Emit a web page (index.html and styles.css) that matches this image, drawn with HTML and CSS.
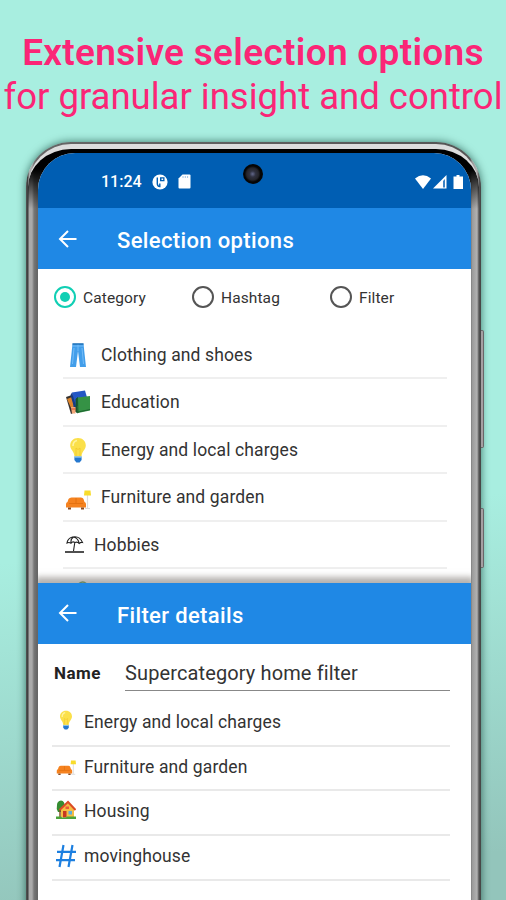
FILE: index.html
```html
<!DOCTYPE html>
<html lang="en">

<head>
    <meta charset="UTF-8" />
    <meta name="viewport" content="width=device-width, initial-scale=1.0" />
    <title>Selection options</title>
    <link rel="stylesheet" href="styles.css">
</head>

<body>
    <svg class="defs" width="0" height="0">
        <symbol id="back" viewBox="0 0 20 20">
            <path d="M18.5 10H2.5M10 2L2 10l8 8" fill="none" stroke="#fff" stroke-width="2" />
        </symbol>
        <symbol id="bulb" viewBox="0 0 26 26">
            <path d="M13 1c-4.800 0-7.800 3.300-7.800 7.600 0 4.200 4 5.700 4.200 10.900h7.200c.2-5.200 4.200-6.700 4.200-10.900 0-4.300-3-7.600-7.800-7.600z" fill="#fbe04a" />
            <path d="M8 9c0-3 1.500-5 4-5.500" fill="none" stroke="#fff3a0" stroke-width="1.600" />
            <path d="M11 19v-8l2 1.500 2-1.500v8" fill="none" stroke="#f3c92c" stroke-width=".8" />
            <path d="M9.400 19.500h7.200v3.500l-2 2.500h-3.200l-2-2.500z" fill="#2578cf" />
            <path d="M9.400 20h7.200" stroke="#9dd0f2" stroke-width="1.200" />
        </symbol>
        <symbol id="couch" viewBox="0 0 26 26">
            <path d="M22.500 9v13M20 22.500h5" stroke="#dcdcdc" stroke-width="1.200" />
            <path d="M19.500 4.500h6l.5 5h-7z" fill="#f8dc2b" />
            <path d="M3.500 13q1-1.500 3-1.500h9.500q2 0 2.500 1.500l1 3q1.500.5 1.500 2v3.500H1V18q0-1.500 1.500-2z" fill="#f5821f" />
            <path d="M11 12v5M4 17.500h14" stroke="#df6d0d" stroke-width=".8" />
            <path d="M3 21.500h3v2H3zM16 21.500h3v2h-3z" fill="#8a4a20" />
        </symbol>
    </svg>

    <div class="headline">
        <h1>Extensive selection options</h1>
        <p>for granular insight and control</p>
    </div>

    <div class="phone">
        <div class="side-button volume"></div>
        <div class="side-button power"></div>
        <div class="bezel">
            <div class="screen">
                <div class="status-bar">
                    <span class="clock">11:24</span>
                    <svg class="status-app" width="16" height="16" viewBox="0 0 16 16">
                        <circle cx="8" cy="8" r="7.600" fill="#fff" />
                        <path d="M5.300 3.500v6q0 3 2.500 3V9.500" fill="none" stroke="#005eb3" stroke-width="1.400" />
                        <path d="M8 3.300h4.500v4H8z" fill="#005eb3" />
                        <path d="M9.500 4.500h1.700v1.500H9.500z" fill="#fff" />
                    </svg>
                    <svg class="status-card" width="13" height="15" viewBox="0 0 13 15">
                        <path d="M4.500.5h7q1 0 1 1v12q0 1-1 1h-10q-1 0-1-1V4.500z" fill="#fff" />
                        <path d="M5 2v2M7.300 2v2M9.600 2v2" stroke="#9fc4e4" stroke-width="1" />
                    </svg>
                    <svg class="status-right" width="50" height="16" viewBox="0 0 50 16">
                        <path d="M0 4.500Q8-2 16 4.500L8 15z" fill="#fff" />
                        <path d="M18 14.500L31.500 1v13.500z" fill="#fff" />
                        <path d="M28 7l2-2v8.500h-2z" fill="#3e83c4" />
                        <path d="M41.500 1h3v1.500H48V15h-9.500V2.500h3z" fill="#fff" />
                    </svg>
                    <div class="camera"></div>
                </div>

                <div class="panel">
                    <div class="app-bar">
                        <svg width="20" height="20"><use href="#back" /></svg>
                        <h2>Selection options</h2>
                    </div>
                    <div class="radio-row">
                        <div class="radio checked"><i></i><span>Category</span></div>
                        <div class="radio"><i></i><span>Hashtag</span></div>
                        <div class="radio"><i></i><span>Filter</span></div>
                    </div>
                    <ul class="category-list">
                        <li>
                            <svg width="26" height="26" viewBox="0 0 26 26">
                                <path d="M7.500 1.500h11l.8 8L21 25h-6L13 9l-2 16H5l1.700-15.500z" fill="#429eea" />
                                <path d="M7 4h12M13 2v7M9 6L7.500 22M17 6l1.500 16" fill="none" stroke="#72bbf8" stroke-width="1" />
                                <path d="M7.500 2h11" stroke="#1766a9" stroke-width="1.200" />
                            </svg>
                            <span>Clothing and shoes</span>
                        </li>
                        <li>
                            <svg width="26" height="26" viewBox="0 0 26 26">
                                <path d="M1 8l6-2 5 16-6 3z" fill="#34302e" />
                                <path d="M2 10l5-2 3 9-4 2z" fill="#dc852c" />
                                <path d="M7 3.500L20 1.500l2 7L9 20z" fill="#2457c5" />
                                <path d="M7 3.500L5.500 6l4 14 2-1z" fill="#173b83" />
                                <path d="M12.500 8.500L25 7v14.500L13 24z" fill="#359245" />
                                <path d="M12.500 8.500L11 10v13l2 1zM13 23l12-2.500" fill="#17572a" stroke="#17572a" stroke-width=".8" />
                                <path d="M6 18h4.500v6.500H7z" fill="#f3a778" />
                                <path d="M6.500 20h4" stroke="#d54e2a" />
                            </svg>
                            <span>Education</span>
                        </li>
                        <li>
                            <svg width="26" height="26"><use href="#bulb" /></svg>
                            <span>Energy and local charges</span>
                        </li>
                        <li>
                            <svg class="low" width="26" height="26"><use href="#couch" /></svg>
                            <span>Furniture and garden</span>
                        </li>
                        <li>
                            <svg width="19" height="19" viewBox="0 0 19 19">
                                <path d="M2 8Q2.500 3.500 7.500 2q7-1.500 10 5.500-2-.5-3.200 1-2-2-4.300-1-2.500-1.500-4 .7Q4 7 2 8zM8.500 2Q5.500 4 6 7.500M8.500 2q5 1.500 5.500 6M9.800 7.500L8.500 16" fill="none" stroke="#222" stroke-width="1.100" />
                                <path d="M0 17h19" stroke="#222" stroke-width="1.600" />
                            </svg>
                            <span>Hobbies</span>
                        </li>
                        <li>
                            <svg width="26" height="26" viewBox="0 0 26 26">
                                <path d="M13 5.500q5-5 9 0" fill="none" stroke="#5c9c55" stroke-width="1.500" />
                            </svg>
                        </li>
                    </ul>
                </div>

                <div class="details">
                    <div class="app-bar">
                        <svg width="20" height="20"><use href="#back" /></svg>
                        <h2>Filter details</h2>
                    </div>
                    <div class="name-row">
                        <label>Name</label>
                        <div class="name-field">Supercategory home filter</div>
                    </div>
                    <ul class="filter-list">
                        <li>
                            <svg class="high" width="20" height="20"><use href="#bulb" /></svg>
                            <span>Energy and local charges</span>
                        </li>
                        <li>
                            <svg width="20" height="20"><use href="#couch" /></svg>
                            <span>Furniture and garden</span>
                        </li>
                        <li>
                            <svg class="high" width="20" height="20" viewBox="0 0 20 20">
                                <path d="M1 5q0-4 4-4.500Q9 1 8.500 6L7 12H2q-2-3-1-7z" fill="#368d31" />
                                <path d="M4 10v8" stroke="#805026" stroke-width="1.500" />
                                <path d="M5 9l7-6 6 6v8.500H5z" fill="#f5bd43" />
                                <path d="M3.500 10L12 2l7.500 8" fill="none" stroke="#dc4c24" stroke-width="2" />
                                <path d="M7 11h3.500v6.500H7z" fill="#c63820" />
                                <path d="M12.500 11H16v3.500h-3.500z" fill="#5eacdb" />
                                <path d="M9.500 6.500H13V9H9.500z" fill="#e95a38" />
                                <path d="M0 16.500h5l1 1h4l1-1h9V19H0z" fill="#4ca33a" />
                            </svg>
                            <span>Housing</span>
                        </li>
                        <li>
                            <svg width="20" height="24" viewBox="0 0 20 24">
                                <path d="M7.500 1L3.500 23M16.500 1l-4 22M1 7.800h19M0 16.200h19" fill="none" stroke="#1c7fe0" stroke-width="2.200" />
                            </svg>
                            <span>movinghouse</span>
                        </li>
                    </ul>
                </div>
            </div>
        </div>
    </div>
</body>

</html>
```
FILE: styles.css
```css
* {
    padding: 0;
    margin: 0;
    box-sizing: border-box;
}

body {
    width: 506px;
    height: 900px;
    overflow: hidden;
    background: linear-gradient(172deg, #a8eee0 0%, #a8eee0 58%, #93c5bb 95%);
    font-family: Roboto, sans-serif;
    color: #333;
}

ul {
    list-style: none;
}

.defs {
    display: block;
}

.headline {
    height: 142px;
    padding-top: 31px;
    text-align: center;
    white-space: nowrap;
    color: #fb2576;
}

.headline h1 {
    font-size: 37px;
    line-height: 44px;
    font-weight: 600;
    letter-spacing: 0.3px;
}

.headline p {
    font-size: 36.5px;
    line-height: 44px;
    font-weight: 370;
    letter-spacing: 0;
}

.phone {
    position: relative;
    width: 455px;
    height: 800px;
    margin-left: 26px;
    padding: 2px 2px 0;
    border-radius: 45px 45px 0 0;
    background: linear-gradient(90deg, #555 0, #3a3a3a 2px, #aaa 3px, #aaa 6px, #777 8px, #666 11px, #555 444px, #999 446px, #b2b2b2 451px, #555 453px, #444 455px);
    box-shadow: 0 0 9px rgba(0, 50, 40, 0.65);
}

.bezel {
    height: 100%;
    padding: 4px 8px 0 10px;
    border-top: 5px solid #ddd;
    border-radius: 43px 43px 0 0;
    background: linear-gradient(#000 0, #000 20px, transparent 60px);
}

.side-button {
    position: absolute;
    left: 455px;
    width: 3px;
    background: #a59fa2;
    border: 1px solid #696668;
    border-left: 0;
    border-radius: 0 2px 2px 0;
}

.volume {
    top: 188px;
    height: 118px;
}

.power {
    top: 366px;
    height: 60px;
}

.screen {
    height: 100%;
    overflow: hidden;
    border-radius: 37px 37px 0 0;
    background: #fff;
}

.status-bar {
    position: relative;
    display: flex;
    align-items: center;
    height: 55px;
    padding: 2px 6px 0 63px;
    background: #005eb3;
    color: #fff;
}

.clock {
    width: 51px;
    font-size: 16px;
    font-weight: 500;
}

.status-card {
    margin-left: 10px;
}

.status-right {
    margin-left: auto;
}

.camera {
    position: absolute;
    top: 11px;
    left: 205px;
    width: 20px;
    height: 20px;
    border-radius: 50%;
    background: radial-gradient(circle at 48% 50%, #62688b 0, #303241 3px, #25252b 6px, #050505 8px);
}

.panel {
    height: 375px;
    overflow: hidden;
}

.app-bar {
    display: flex;
    align-items: center;
    height: 61px;
    padding-left: 20px;
    background: #1f88e5;
    color: #fff;
}

.app-bar h2 {
    margin: 3px 0 0 39px;
    font-size: 22px;
    font-weight: 500;
    letter-spacing: 0.36px;
}

.radio-row {
    display: flex;
    align-items: center;
    height: 56px;
    padding-left: 16px;
}

.radio {
    display: flex;
    align-items: center;
    gap: 7px;
    width: 138px;
    font-size: 15.5px;
    letter-spacing: 0.1px;
}

.radio span {
    padding-top: 1px;
}

.radio i {
    width: 22px;
    height: 22px;
    border: 2px solid #555;
    border-radius: 50%;
}

.radio.checked i {
    padding: 4px;
    border-color: #10cfb4;
    background: #10cfb4 content-box;
}

.category-list {
    padding: 6.5px 24px 0 25px;
}

.category-list li {
    display: flex;
    align-items: center;
    gap: 10px;
    height: 47.5px;
    padding: 1px 0 0 2px;
    border-bottom: 2px solid #efefef;
    font-size: 17.5px;
    letter-spacing: 0.12px;
}

.low {
    margin-top: 3px;
}

.high {
    margin-top: -3px;
}

.details {
    position: relative;
    height: 400px;
    background: #fff;
    box-shadow: 0 -3px 6px 3px rgba(120, 115, 110, 0.55);
}

.details .app-bar svg {
    margin-top: -2px;
}

.name-row {
    display: flex;
    height: 54px;
    padding: 12px 21px 0 16px;
}

.name-row label {
    width: 71px;
    line-height: 34px;
    font-size: 17px;
    font-weight: 700;
    letter-spacing: 0.5px;
    color: #222;
}

.name-field {
    flex: 1;
    height: 35px;
    line-height: 34px;
    border-bottom: 1px solid #888;
    font-size: 20px;
    letter-spacing: 0.12px;
}

.filter-list {
    padding: 4px 21px 0 14px;
}

.filter-list li {
    display: flex;
    align-items: center;
    gap: 8px;
    height: 44.7px;
    padding: 0 0 3px 4px;
    border-bottom: 2px solid #e9e9e9;
    font-size: 17.5px;
    letter-spacing: 0.12px;
}
```
